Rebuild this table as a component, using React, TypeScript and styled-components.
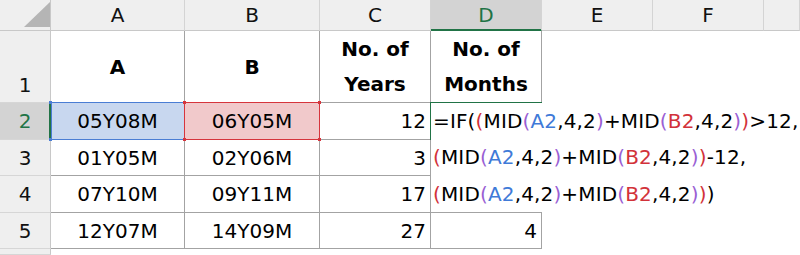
import React from "react";
import styled, { createGlobalStyle, css } from "styled-components";

const GlobalStyle = createGlobalStyle`
  html, body { margin: 0; padding: 0; background: #ffffff; overflow: hidden; }
  body { font-family: "DejaVu Sans", Verdana, sans-serif; }
`;

const GREEN = "#217346";
const TABLE_LINE = "#a3a3a3";

const Sheet = styled.div`
  display: grid;
  grid-template-columns: 51px 134px 135px 111px 111px 111px 111px 1fr;
  grid-template-rows: 31px 72px 37px 36px 37px 36px 1fr;
  width: 800px;
  height: 255px;
  overflow: hidden;
  font-family: "DejaVu Sans", Verdana, sans-serif;
  color: #000000;
`;

const Corner = styled.div`
  box-sizing: border-box;
  background: #efefef;
  border-right: 1px solid #c8c8c8;
  border-bottom: 1px solid #c8c8c8;
  display: flex;
  align-items: flex-end;
  justify-content: flex-end;
  padding: 0 0 3px 0;
`;

const ColHeader = styled.div<{ $active?: boolean }>`
  box-sizing: border-box;
  display: flex;
  align-items: center;
  justify-content: center;
  font-size: 20px;
  color: ${(p) => (p.$active ? GREEN : "#111111")};
  background: ${(p) => (p.$active ? "#d3d3d3" : "#efefef")};
  border-right: 1px solid #d4d4d4;
  border-bottom: 1px solid ${(p) => (p.$active ? GREEN : "#c8c8c8")};
  ${(p) =>
    p.$active &&
    css`
      box-shadow: inset 0 -1px 0 ${GREEN};
    `}
`;

const RowHeader = styled.div<{ $active?: boolean; $bottom?: boolean }>`
  box-sizing: border-box;
  display: flex;
  justify-content: center;
  align-items: ${(p) => (p.$bottom ? "flex-end" : "center")};
  padding-bottom: ${(p) => (p.$bottom ? "5px" : "0")};
  font-size: 20px;
  color: ${(p) => (p.$active ? GREEN : "#111111")};
  background: ${(p) => (p.$active ? "#d3d3d3" : "#efefef")};
  border-right: 1px solid ${(p) => (p.$active ? GREEN : "#c8c8c8")};
  border-bottom: 1px solid #d6d6d6;
  ${(p) =>
    p.$active &&
    css`
      box-shadow: inset -1px 0 0 ${GREEN};
    `}
`;

type Align = "left" | "center" | "right";

const Cell = styled.div<{ $align?: Align; $bold?: boolean; $border?: boolean }>`
  box-sizing: border-box;
  position: relative;
  display: flex;
  align-items: center;
  justify-content: ${(p) =>
    p.$align === "right" ? "flex-end" : p.$align === "center" ? "center" : "flex-start"};
  padding: 0 4px;
  font-size: 20px;
  font-weight: ${(p) => (p.$bold ? 700 : 400)};
  white-space: nowrap;
  background: #ffffff;
  ${(p) =>
    p.$border &&
    css`
      border-right: 1px solid ${TABLE_LINE};
      border-bottom: 1px solid ${TABLE_LINE};
    `}
`;

const TwoLine = styled.span`
  display: block;
  text-align: center;
  line-height: 35px;
`;

const RefCell = styled(Cell)<{ $fill: string; $edge: string; $w: number; $h: number; $inner?: boolean }>`
  background: ${(p) => p.$fill};
  border-right: 1px solid ${(p) => p.$edge};
  border-bottom: 1px solid ${(p) => p.$edge};
  &::after {
    content: "";
    position: absolute;
    top: -1px;
    left: ${(p) => (p.$inner ? "0" : "-1px")};
    right: 0;
    bottom: 0;
    border-top: 1px solid ${(p) => p.$edge};
    border-left: 1px solid ${(p) => p.$edge};
    pointer-events: none;
  }
  &::before {
    content: "";
    position: absolute;
    top: -2px;
    left: -2px;
    width: 3px;
    height: 3px;
    background: ${(p) => p.$edge};
    box-shadow: ${(p) => `${p.$w}px 0 0 ${p.$edge}, 0 ${p.$h}px 0 ${p.$edge}, ${p.$w}px ${p.$h}px 0 ${p.$edge}`};
    z-index: 1;
  }
`;

const ActiveCell = styled(Cell)`
  &::before {
    content: "";
    position: absolute;
    top: -1px;
    left: -1px;
    width: 112px;
    height: 38px;
    box-sizing: border-box;
    border-top: 1px solid ${GREEN};
    border-left: 1px solid ${GREEN};
    z-index: 3;
    pointer-events: none;
  }
`;

const Editor = styled.div`
  position: absolute;
  top: 0;
  left: 0;
  width: 369px;
  height: 109px;
  box-sizing: border-box;
  padding-left: 2px;
  background: #ffffff;
  z-index: 2;
  font-size: 20px;
  letter-spacing: 0.15px;
  line-height: 36.33px;
  white-space: pre;
  color: #000000;
`;

const Tok = styled.span<{ $c: "red" | "purple" | "blue" | "ref" }>`
  color: ${(p) =>
    p.$c === "red" ? "#d2323a" : p.$c === "purple" ? "#9a5fd4" : p.$c === "blue" ? "#3f7ad8" : "#d2323a"};
`;

const Blank = styled.div`
  background: #ffffff;
`;

const Paren = ({ c, ch }: { c: "red" | "purple"; ch: string }) => <Tok $c={c}>{ch}</Tok>;

const MidSum = () => (
  <>
    MID<Paren c="purple" ch="(" />
    <Tok $c="blue">A2</Tok>,4,2<Paren c="purple" ch=")" />+MID<Paren c="purple" ch="(" />
    <Tok $c="ref">B2</Tok>,4,2<Paren c="purple" ch=")" />
  </>
);

const rows = [
  { n: "3", a: "01Y05M", b: "02Y06M", c: "3" },
  { n: "4", a: "07Y10M", b: "09Y11M", c: "17" },
  { n: "5", a: "12Y07M", b: "14Y09M", c: "27", d: "4" },
];

export default function App() {
  return (
    <>
      <GlobalStyle />
      <Sheet>
        <Corner>
          <svg width="26" height="25" viewBox="0 0 26 25">
            <polygon points="26,0 26,25 0,25" fill="#b5b5b5" />
          </svg>
        </Corner>
        {["A", "B", "C", "D", "E", "F", ""].map((l, i) => (
          <ColHeader key={i} $active={l === "D"}>
            {l}
          </ColHeader>
        ))}

        <RowHeader $bottom>1</RowHeader>
        <Cell $border $bold $align="center">A</Cell>
        <Cell $border $bold $align="center">B</Cell>
        <Cell $border $bold $align="center">
          <TwoLine>
            No. of
            <br />
            Years
          </TwoLine>
        </Cell>
        <Cell $border $bold $align="center">
          <TwoLine>
            No. of
            <br />
            Months
          </TwoLine>
        </Cell>
        <Blank />
        <Blank />
        <Blank />

        <RowHeader $active>2</RowHeader>
        <RefCell $fill="#c8d7ef" $edge="#4a7dd4" $w={134} $h={37} $inner $align="center">
          05Y08M
        </RefCell>
        <RefCell $fill="#f1c9cb" $edge="#d6353d" $w={135} $h={37} $align="center">
          06Y05M
        </RefCell>
        <Cell $border $align="right">12</Cell>
        <ActiveCell $border>
          <Editor>
            =IF(<Paren c="red" ch="(" />
            <MidSum />
            <Paren c="red" ch=")" />
            {">12,\n"}
            <Paren c="red" ch="(" />
            <MidSum />
            <Paren c="red" ch=")" />
            {"-12,\n"}
            <Paren c="red" ch="(" />
            <MidSum />
            <Paren c="red" ch=")" />)
          </Editor>
        </ActiveCell>
        <Blank />
        <Blank />
        <Blank />

        {rows.map((r) => (
          <React.Fragment key={r.n}>
            <RowHeader>{r.n}</RowHeader>
            <Cell $border $align="center">{r.a}</Cell>
            <Cell $border $align="center">{r.b}</Cell>
            <Cell $border $align="right">{r.c}</Cell>
            <Cell $border $align="right">{r.d ?? ""}</Cell>
            <Blank />
            <Blank />
            <Blank />
          </React.Fragment>
        ))}

        <RowHeader />
        <Blank />
        <Blank />
        <Blank />
        <Blank />
        <Blank />
        <Blank />
        <Blank />
      </Sheet>
    </>
  );
}
